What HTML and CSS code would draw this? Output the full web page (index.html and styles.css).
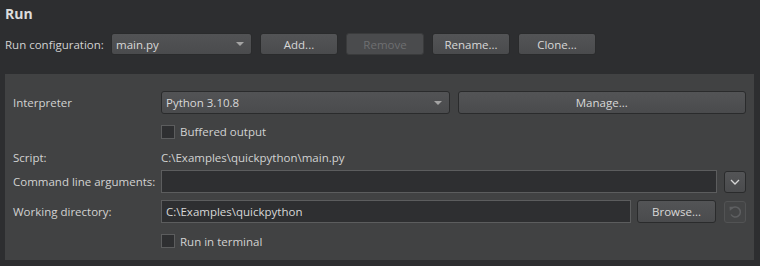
FILE: index.html
```html
<!DOCTYPE html>
<html>
<head>
<meta charset="utf-8">
<link rel="stylesheet" href="styles.css">
</head>
<body>
<div class="page">
  <div class="title">Run</div>
  <div class="config-row">
    <span class="label">Run configuration:</span>
    <div class="combo combo-config"><span>main.py</span><span class="arrow"></span></div>
    <button class="btn btn-config">Add...</button>
    <button class="btn btn-config" disabled>Remove</button>
    <button class="btn btn-config">Rename...</button>
    <button class="btn btn-config">Clone...</button>
  </div>
  <div class="panel">
    <span class="label">Interpreter</span>
    <div class="pair">
      <div class="combo"><span>Python 3.10.8</span><span class="arrow"></span></div>
      <button class="btn">Manage...</button>
    </div>

    <span></span>
    <label class="check"><span class="box"></span><span>Buffered output</span></label>

    <span class="label">Script:</span>
    <span class="value">C:\Examples\quickpython\main.py</span>

    <span class="label">Command line arguments:</span>
    <div class="line">
      <div class="field"></div>
      <button class="btn icon-btn">
        <svg width="10" height="6" viewBox="0 0 10 6"><path d="M1 1 L5 5 L9 1" fill="none" stroke="#d6d6d6" stroke-width="1.3"/></svg>
      </button>
    </div>

    <span class="label">Working directory:</span>
    <div class="line">
      <div class="field">C:\Examples\quickpython</div>
      <button class="btn btn-browse">Browse...</button>
      <button class="btn icon-btn" disabled>
        <svg width="14" height="14" viewBox="0 0 14 14"><path d="M3.2 4.2 A5 5 0 1 1 3 9.5" fill="none" stroke="#5e5f61" stroke-width="1.5"/><path d="M1.5 1.8 L5.8 1.8 L1.8 6 Z" fill="#5e5f61"/></svg>
      </button>
    </div>

    <span></span>
    <label class="check"><span class="box"></span><span>Run in terminal</span></label>
  </div>
</div>
</body>
</html>
```

FILE: styles.css
```css
html, body {
  margin: 0;
  padding: 0;
}
body {
  background: #2d2e30;
  color: #d2d2d2;
  font-family: "Open Sans", "Noto Sans", sans-serif;
  font-size: 11.5px;
  width: 760px;
  height: 266px;
  overflow: hidden;
  white-space: nowrap;
}
.page {
  padding: 0 6px 0 5px;
}
.title {
  font-size: 14px;
  font-weight: bold;
  height: 33px;
  line-height: 28px;
  color: #dcdcdc;
}
.config-row {
  display: flex;
  align-items: center;
  height: 22px;
}
.config-row .label {
  width: 106px;
}
.combo {
  box-sizing: border-box;
  height: 100%;
  display: flex;
  align-items: center;
  justify-content: space-between;
  padding: 0 7px 0 4px;
  background: linear-gradient(#525355, #4a4b4d);
  border: 1px solid #2a2b2c;
  border-radius: 3px;
  color: #d8d8d8;
}
.combo-config {
  width: 141px;
  margin-right: 8px;
}
.arrow {
  width: 0;
  height: 0;
  border-left: 4px solid transparent;
  border-right: 4px solid transparent;
  border-top: 4px solid #a4a4a4;
}
.btn {
  box-sizing: border-box;
  height: 100%;
  margin: 0;
  padding: 0;
  font: inherit;
  color: #d8d8d8;
  background: linear-gradient(#535456, #4a4b4d);
  border: 1px solid #2a2b2c;
  border-radius: 3px;
  display: flex;
  align-items: center;
  justify-content: center;
}
.btn:disabled {
  color: #6e6f71;
  background: #4a4b4d;
  border-color: #3a3b3c;
}
.btn-config {
  width: 78px;
  margin-right: 8px;
}
.panel {
  margin-top: 19px;
  width: 749px;
  box-sizing: border-box;
  height: 186px;
  background: #414243;
  padding: 17px 8px 3px 8px;
  display: grid;
  grid-template-columns: 148px 1fr;
  grid-template-rows: 23px 35px 16px 33px 27px 32px;
  align-items: center;
}
.pair {
  display: grid;
  grid-template-columns: 1fr 1fr;
  column-gap: 8px;
  height: 23px;
}
.line {
  display: flex;
  align-items: center;
  height: 23px;
}
.field {
  box-sizing: border-box;
  flex: 1;
  height: 23px;
  background: #2e2f31;
  border: 1px solid #5c5d5e;
  padding: 0 4px;
  line-height: 21px;
  color: #d8d8d8;
}
.icon-btn {
  width: 22px;
  height: 22px;
  margin-left: 7px;
  flex: none;
}
.icon-btn:disabled {
  background: #444546;
  border-color: #525354;
}
.btn-browse {
  width: 79px;
  height: 23px;
  margin-left: 6px;
  flex: none;
}
.btn-browse + .icon-btn {
  margin-left: 8px;
}
.check {
  display: flex;
  align-items: center;
}
.box {
  box-sizing: border-box;
  width: 14px;
  height: 14px;
  background: #2e2f31;
  border: 1px solid #5c5d5e;
  margin-right: 5px;
}
.value {
  color: #d2d2d2;
}
```
